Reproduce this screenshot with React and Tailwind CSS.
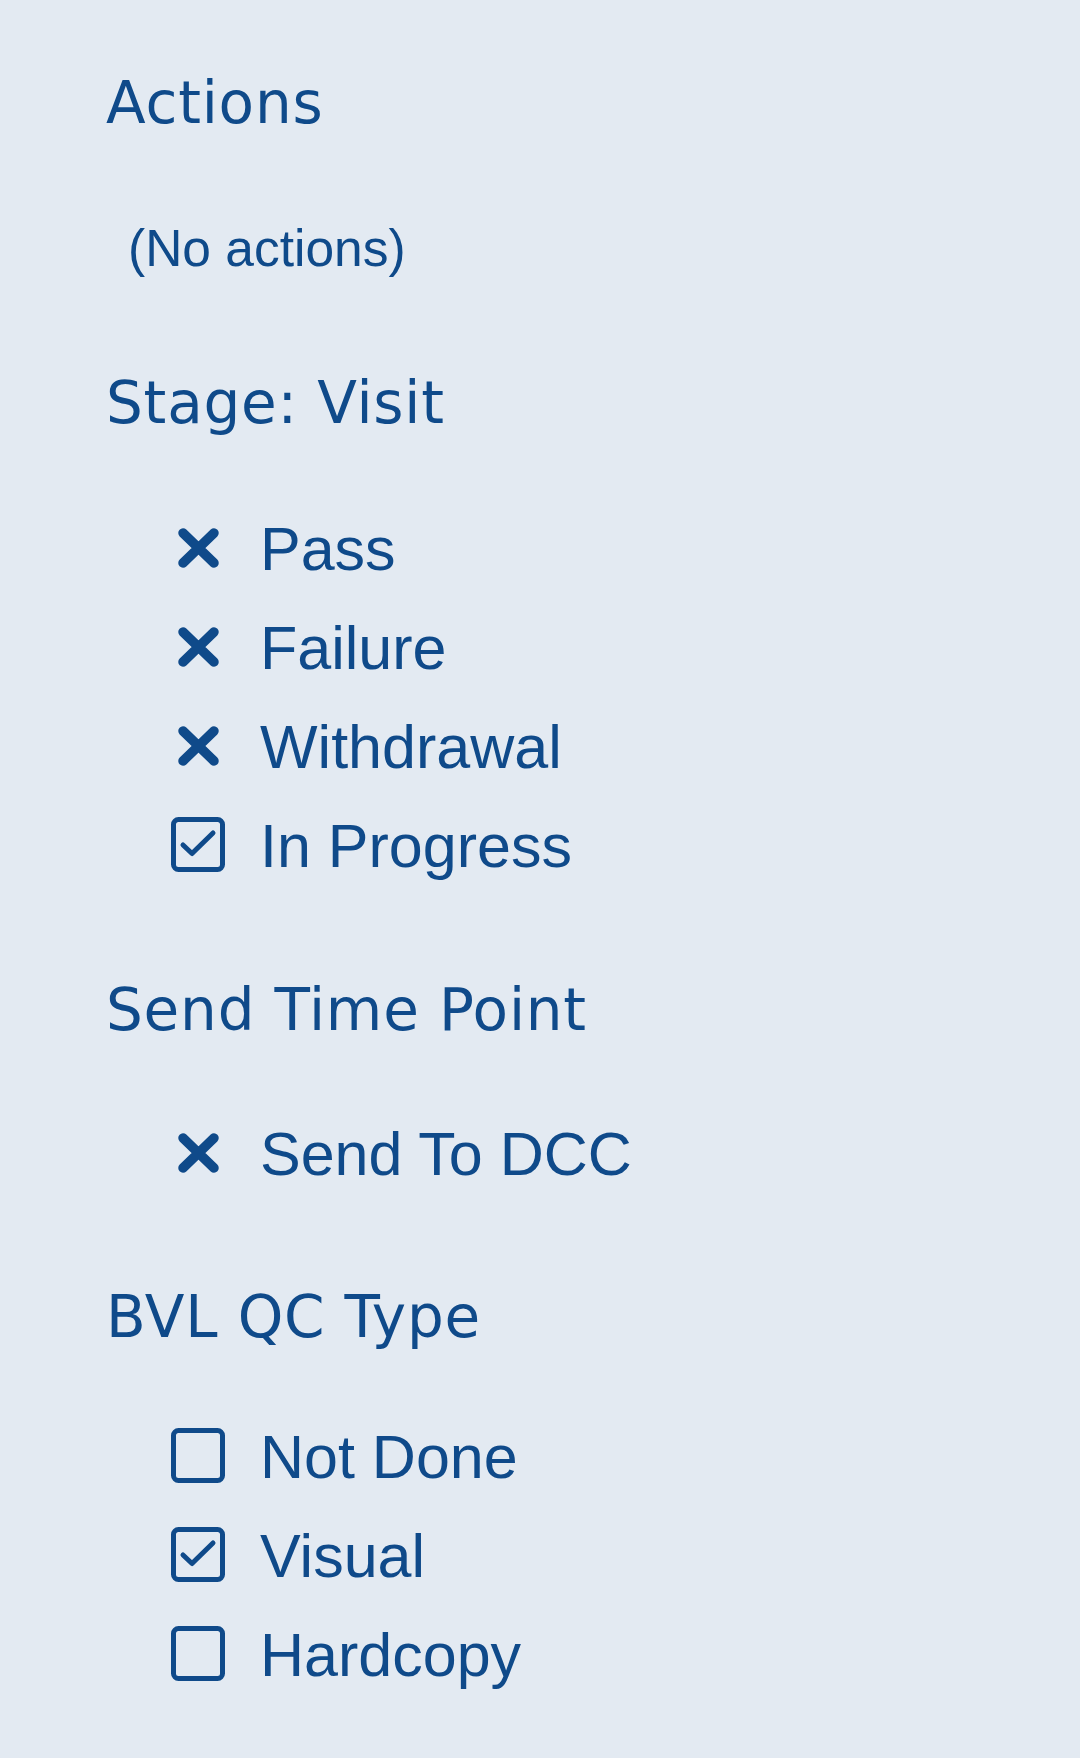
const heading = "text-[58px] leading-[66px] tracking-[0.8px] font-['DejaVu_Sans',Verdana,sans-serif]";
const itemText = "text-[61px] leading-[99px] font-['Liberation_Sans',Arial,sans-serif]";

function Cross() {
  return (
    <svg width="43" height="42" viewBox="0 0 43 42" className="mb-[4px]">
      <path d="M6 6 L37 36 M37 6 L6 36" stroke="currentColor" strokeWidth="9.5" strokeLinecap="round" fill="none" />
    </svg>
  );
}

function Box({ checked }) {
  return (
    <svg width="54" height="55" viewBox="0 0 54 55" className="mb-[4px]">
      <rect x="2.5" y="2.5" width="49" height="50" rx="5" stroke="currentColor" strokeWidth="5" fill="none" />
      {checked && (
        <path d="M12 28 L21 36.5 L42 16" stroke="currentColor" strokeWidth="5" strokeLinecap="round" strokeLinejoin="round" fill="none" />
      )}
    </svg>
  );
}

function Item({ icon, label }) {
  return (
    <li className={`flex items-center ${itemText}`}>
      <span className="flex w-[54px] justify-center">{icon}</span>
      <span className="ml-[35px]">{label}</span>
    </li>
  );
}

export default function App() {
  return (
    <div className="min-h-[1758px] w-[1080px] bg-[#e3eaf2] pl-[106px] pt-[70px] text-[#0f4a8a]">
      {/* Actions */}
      <h2 className={heading}>Actions</h2>
      <p className="mt-[84px] ml-[22px] text-[51.5px] leading-[56px] font-['Liberation_Sans',Arial,sans-serif]">
        (No actions)
      </p>

      {/* Stage */}
      <h2 className={`mt-[94px] ${heading}`}>Stage: Visit</h2>
      <ul className="mt-[64px] ml-[65px]">
        <Item icon={<Cross />} label="Pass" />
        <Item icon={<Cross />} label="Failure" />
        <Item icon={<Cross />} label="Withdrawal" />
        <Item icon={<Box checked />} label="In Progress" />
      </ul>

      {/* Send Time Point */}
      <h2 className={`mt-[81px] ${heading}`}>Send Time Point</h2>
      <ul className="mt-[62px] ml-[65px]">
        <Item icon={<Cross />} label="Send To DCC" />
      </ul>

      {/* BVL QC Type */}
      <h2 className={`mt-[80px] ${heading}`}>BVL QC Type</h2>
      <ul className="mt-[58px] ml-[65px]">
        <Item icon={<Box />} label="Not Done" />
        <Item icon={<Box checked />} label="Visual" />
        <Item icon={<Box />} label="Hardcopy" />
      </ul>
    </div>
  );
}
